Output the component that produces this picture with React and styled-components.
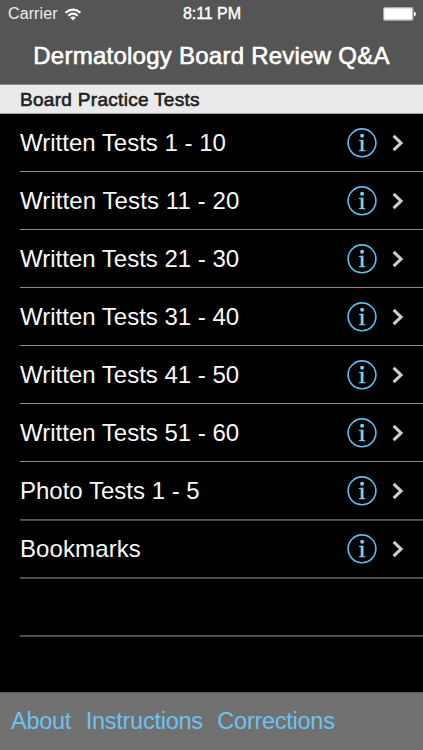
import React from "react";
import styled, { createGlobalStyle } from "styled-components";

const GlobalStyle = createGlobalStyle`
  * { box-sizing: border-box; }
  body {
    margin: 0;
    background: #000;
    font-family: "Liberation Sans", Arial, sans-serif;
  }
`;

const Screen = styled.div`
  width: 423px;
  height: 750px;
  display: flex;
  flex-direction: column;
  overflow: hidden;
  background: #000;
  color: #fff;
`;

const Header = styled.header`
  flex: 0 0 84px;
  background: #555;
`;

const StatusBar = styled.div`
  height: 28px;
  padding: 0 7px 0 8px;
  display: grid;
  grid-template-columns: 1fr auto 1fr;
  align-items: center;
`;

const Carrier = styled.div`
  display: flex;
  align-items: center;
  gap: 6px;
  font-size: 16px;
  letter-spacing: 0.1px;
  color: #eee;
`;

const Clock = styled.div`
  font-size: 16px;
  letter-spacing: -0.05px;
  -webkit-text-stroke: 0.4px #fff;
`;

const Battery = styled.svg`
  justify-self: end;
  display: block;
`;

const Title = styled.h1`
  margin: 0;
  height: 56px;
  line-height: 55px;
  text-align: center;
  white-space: nowrap;
  font-size: 24px;
  font-weight: 400;
  letter-spacing: 0.25px;
  -webkit-text-stroke: 0.6px #fff;
`;

const SectionHeader = styled.h2`
  margin: 0;
  flex: 0 0 30px;
  height: 30px;
  min-height: 0;
  padding-left: 20px;
  border-top: 1px solid #8b8b8b;
  border-bottom: 1px solid #a5a5a7;
  background: #eaeaec;
  color: #222;
  font-size: 19px;
  font-weight: 400;
  line-height: 30px;
  letter-spacing: 0.3px;
  -webkit-text-stroke: 0.6px #222;
`;

const List = styled.ul`
  flex: 1;
  margin: 0;
  padding: 0 0 0 20px;
  list-style: none;
`;

const Row = styled.li`
  height: 58px;
  padding-right: 19px;
  display: flex;
  align-items: center;
  border-bottom: 1px solid ${(p) => (p.$soft ? "#565656" : "#8c8c8c")};
  box-shadow: ${(p) => (p.$soft ? "0 1px 0 #464646" : "none")};
`;

const Label = styled.span`
  flex: 1;
  font-size: 24px;
  line-height: 28px;
  letter-spacing: ${(p) => p.$tracking || "0"};
  color: #f8f8f8;
`;

const InfoIcon = styled.svg`
  display: block;
  margin-right: 15px;
`;

const Chevron = styled.svg`
  display: block;
`;

const Toolbar = styled.nav`
  flex: 0 0 58px;
  padding: 0 11px;
  display: flex;
  align-items: center;
  gap: 14.6px;
  background: #717171;
  border-top: 1px solid #5d5d5d;
`;

const ToolbarLink = styled.span`
  font-size: 23.5px;
  letter-spacing: -0.26px;
  color: #6cc3f1;
`;

const ROWS = [
  { text: "Written Tests 1 - 10" },
  { text: "Written Tests 11 - 20", tracking: "0.09px" },
  { text: "Written Tests 21 - 30" },
  { text: "Written Tests 31 - 40" },
  { text: "Written Tests 41 - 50" },
  { text: "Written Tests 51 - 60" },
  { text: "Photo Tests 1 - 5", soft: true },
  { text: "Bookmarks", tracking: "0.1px", soft: true },
];

function Wifi() {
  return (
    <svg width="18" height="13" viewBox="0 0 18 13" fill="none" stroke="#fff" strokeWidth="2">
      <path d="M1.5 4.8 Q9 -1.6 16.5 4.8" />
      <path d="M4.3 7.7 Q9 3.6 13.7 7.7" />
      <path d="M6.2 9.6 Q9 7.4 11.8 9.6 L9 12.4Z" fill="#fff" stroke="none" />
    </svg>
  );
}

function Info() {
  return (
    <InfoIcon width="30" height="30" viewBox="0 0 30 30" fill="#78cdf6">
      <circle cx="15" cy="14.8" r="13.9" fill="none" stroke="#60bbe9" strokeWidth="1.6" />
      <circle cx="15.1" cy="7.8" r="2" />
      <path d="M11.8 11.9 L16.5 11.4 V22 L18.5 22.5 V23.3 H11.7 V22.5 L13.7 22 V13 L11.8 12.7Z" />
    </InfoIcon>
  );
}

export default function App() {
  return (
    <>
      <GlobalStyle />
      <Screen>
        <Header>
          <StatusBar>
            <Carrier>
              <span>Carrier</span>
              <Wifi />
            </Carrier>
            <Clock>8:11 PM</Clock>
            <Battery width="33" height="14" viewBox="0 0 33 14">
              <rect x="0.6" y="0.6" width="29.3" height="12.6" rx="1.5" fill="#fff" stroke="#aaa" strokeWidth="1.2" />
              <path d="M31 4.7 Q33 5 33 7 Q33 9 31 9.3Z" fill="#fff" />
            </Battery>
          </StatusBar>
          <Title>Dermatology Board Review Q&amp;A</Title>
        </Header>
        <SectionHeader>Board Practice Tests</SectionHeader>
        <List>
          {ROWS.map(({ text, tracking, soft }) => (
            <Row key={text} $soft={soft}>
              <Label $tracking={tracking}>{text}</Label>
              <Info />
              <Chevron width="12" height="18" viewBox="0 0 12 18">
                <path d="M1.6 1.8 L9 9 L1.6 16.2" fill="none" stroke="#cfcccf" strokeWidth="3.1" />
              </Chevron>
            </Row>
          ))}
          <Row $soft />
        </List>
        <Toolbar>
          <ToolbarLink>About</ToolbarLink>
          <ToolbarLink>Instructions</ToolbarLink>
          <ToolbarLink>Corrections</ToolbarLink>
        </Toolbar>
      </Screen>
    </>
  );
}
